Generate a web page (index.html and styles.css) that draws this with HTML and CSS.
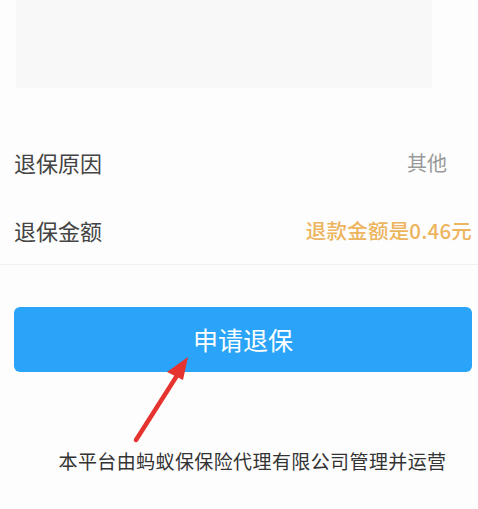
FILE: index.html
```html
<!DOCTYPE html>
<html lang="zh-CN">
<head>
<meta charset="utf-8">
<link rel="stylesheet" href="styles.css">
</head>
<body>
<div class="page">
  <div class="preview"></div>
  <div class="list">
    <div class="row">
      <span class="label">退保原因</span>
      <span class="value value-grey">其他</span>
    </div>
    <div class="row">
      <span class="label">退保金额</span>
      <span class="value value-gold">退款金额是0.46元</span>
    </div>
  </div>
  <div class="action">
    <button class="btn">申请退保</button>
    <svg class="arrow" width="80" height="100" viewBox="0 0 80 100">
      <line x1="12" y1="88" x2="54" y2="22" stroke="#e53430" stroke-width="4.5" stroke-linecap="round"/>
      <polygon points="64,5 43,20 59,28" fill="#e53430"/>
    </svg>
  </div>
  <p class="footer">本平台由蚂蚁保保险代理有限公司管理并运营</p>
</div>
</body>
</html>
```
FILE: styles.css
```css
html, body {
  margin: 0;
  padding: 0;
  background: #fdfdfd;
}
body {
  font-family: "Noto Sans CJK SC", "Noto Sans", sans-serif;
  color: #333;
}
.page {
  width: 478px;
  height: 509px;
  overflow: hidden;
}
.preview {
  margin-left: 16px;
  width: 416px;
  height: 88px;
  background: #f8f8f8;
}
.list {
  margin-top: 40px;
  border-bottom: 1px solid #f0f0f0;
}
.row {
  height: 68px;
  display: flex;
  align-items: center;
  justify-content: space-between;
  padding: 0 6px 0 14px;
}
.label {
  font-size: 22px;
  color: #444;
}
.value {
  font-size: 20px;
}
.value-grey {
  color: #999;
  margin-right: 25px;
}
.value-gold {
  color: #edb45e;
  font-weight: 500;
  font-size: 20.5px;
  letter-spacing: 0.2px;
}
.action {
  position: relative;
  margin-top: 42px;
  padding: 0 6px 0 14px;
}
.btn {
  display: block;
  width: 100%;
  height: 65px;
  border: 0;
  border-radius: 6px;
  background: #2aa4f8;
  color: #fff;
  font-family: inherit;
  font-size: 25px;
  padding: 0;
  line-height: 65px;
}
.arrow {
  position: absolute;
  left: 124px;
  top: 45px;
}
.footer {
  margin: 75px 0 0 0;
  text-align: center;
  font-size: 19px;
  line-height: 28px;
  letter-spacing: 0.4px;
  padding-left: 27px;
  color: #333;
}
```
